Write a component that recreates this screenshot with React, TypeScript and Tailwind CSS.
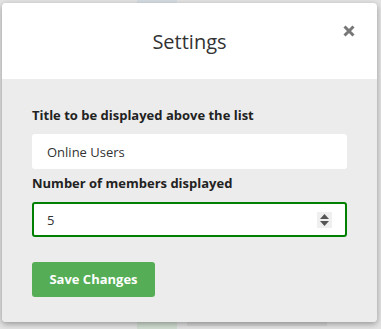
import React from "react";

export default function App() {
  return (
    <div
      className="relative w-[381px] h-[329px] bg-[#e4e4e4] overflow-hidden"
      style={{ fontFamily: '"Open Sans", "Noto Sans", sans-serif' }}
    >
      {/* faded background page bits */}
      <div className="absolute left-[137px] top-0 w-[40px] h-[3px] bg-[#d5dde3]" />
      <div className="absolute left-[137px] top-[322px] w-[40px] h-[7px] bg-[#d3dfd3]" />
      <div className="absolute left-[187px] top-[322px] w-[140px] h-[4px] bg-[#d8d8d8]" />

      <div className="absolute left-[2px] top-[3px] w-[375px] h-[319px] rounded-[4px] overflow-hidden shadow-[0_2px_6px_rgba(0,0,0,0.35)] flex flex-col">
        <div className="relative h-[76px] bg-white flex items-center justify-center shrink-0">
          <span className="text-[20px] text-[#333] leading-none mt-[2px]">Settings</span>
          <svg
            className="absolute left-[341px] top-[22px]"
            width="12"
            height="12"
            viewBox="0 0 12 12"
          >
            <path d="M1.5 1.5 L10.5 10.5 M10.5 1.5 L1.5 10.5" stroke="#777" strokeWidth="3" strokeLinecap="butt" />
          </svg>
        </div>
        <div className="flex-1 bg-[#ececec] px-[30px] pt-[27px] flex flex-col">
          <label className="text-[13px] font-bold text-[#222] leading-[18px]">
            Title to be displayed above the list
          </label>
          <input
            className="mt-[10px] h-[35px] w-[315px] rounded-[3px] bg-white px-[15px] text-[13px] text-[#333] outline-none"
            defaultValue="Online Users"
          />
          <label className="mt-[5px] text-[13px] font-bold text-[#222] leading-[18px]">
            Number of members displayed
          </label>
          <div className="relative mt-[10px] w-[315px]">
            <input
              type="number"
              className="h-[35px] w-[315px] rounded-[3px] bg-white pl-[13px] pr-[12px] text-[13px] text-[#333] border-2 border-[#008000] outline-none [appearance:textfield] [&::-webkit-inner-spin-button]:appearance-none [&::-webkit-outer-spin-button]:appearance-none"
              defaultValue={5}
            />
            <div className="absolute left-[285px] top-[10px] w-[15px] h-[16px] bg-[#efefef] flex flex-col items-center justify-center gap-[2px]">
              <svg width="9" height="5" viewBox="0 0 9 5">
                <path d="M4.5 0 L9 5 L0 5 Z" fill="#555" />
              </svg>
              <svg width="9" height="5" viewBox="0 0 9 5">
                <path d="M0 0 L9 0 L4.5 5 Z" fill="#555" />
              </svg>
            </div>
          </div>
          <button className="mt-[25px] h-[35px] w-[123px] rounded-[3px] bg-[#55ad55] text-white text-[13px] font-bold">
            Save Changes
          </button>
        </div>
      </div>
    </div>
  );
}
